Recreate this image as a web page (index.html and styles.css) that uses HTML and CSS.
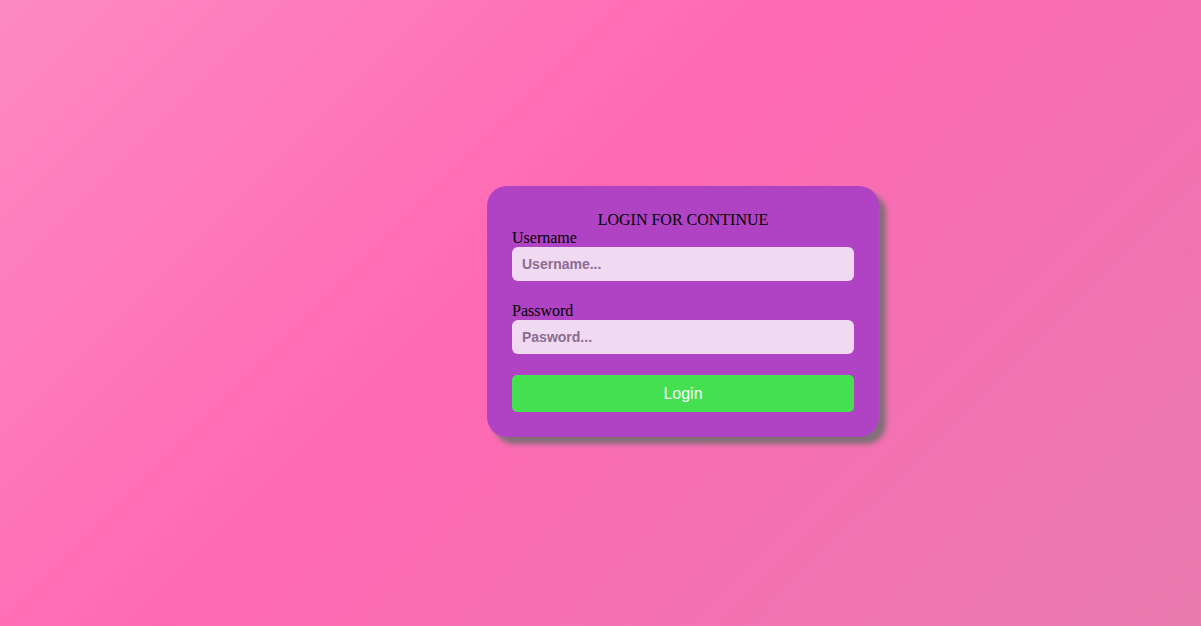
FILE: index.html
```html
<!DOCTYPE html>
<html>
<head>
<meta charset="utf-8">
<link rel="stylesheet" href="styles.css">
</head>
<body>
<div class="page">
  <form class="card">
    <div class="title">LOGIN FOR CONTINUE</div>
    <label class="label" for="u">Username</label>
    <input class="field" id="u" type="text" placeholder="Username...">
    <label class="label" for="p">Password</label>
    <input class="field" id="p" type="password" placeholder="Pasword...">
    <button class="btn" type="button">Login</button>
  </form>
</div>
</body>
</html>
```
FILE: styles.css
```css
html, body {
  margin: 0;
  padding: 0;
  height: 100%;
}
body {
  font-family: "Liberation Serif", "Times New Roman", serif;
  font-size: 16px;
  background: linear-gradient(135deg, #fd8ac2 0%, #ff69b4 43%, #e87aae 100%);
  overflow: hidden;
}
.page {
  height: 626px;
  box-sizing: border-box;
  padding-top: 186px;
  padding-left: 487px;
}
.card {
  width: 392px;
  box-sizing: border-box;
  padding: 25px;
  background: #b042c4;
  border-radius: 20px;
  box-shadow: 7px 7px 5px rgba(110, 110, 110, 0.85);
  display: flex;
  flex-direction: column;
  color: #000;
}
.title {
  text-align: center;
  line-height: 18px;
  height: 18px;
}
.label {
  line-height: 18px;
  display: block;
}
.field {
  height: 34px;
  box-sizing: border-box;
  border: none;
  border-radius: 6px;
  background: #f0daf2;
  padding: 0 10px;
  font-family: "Liberation Sans", Arial, sans-serif;
  font-weight: bold;
  font-size: 14px;
  margin: 0 0 21px 0;
  outline: none;
}
.field::placeholder {
  color: #8b6c93;
}
.btn {
  height: 37px;
  border: none;
  border-radius: 5px;
  background: #44e04f;
  color: #fff;
  font-family: "Liberation Sans", Arial, sans-serif;
  font-size: 16px;
  padding: 0;
  margin: 0;
}
```
